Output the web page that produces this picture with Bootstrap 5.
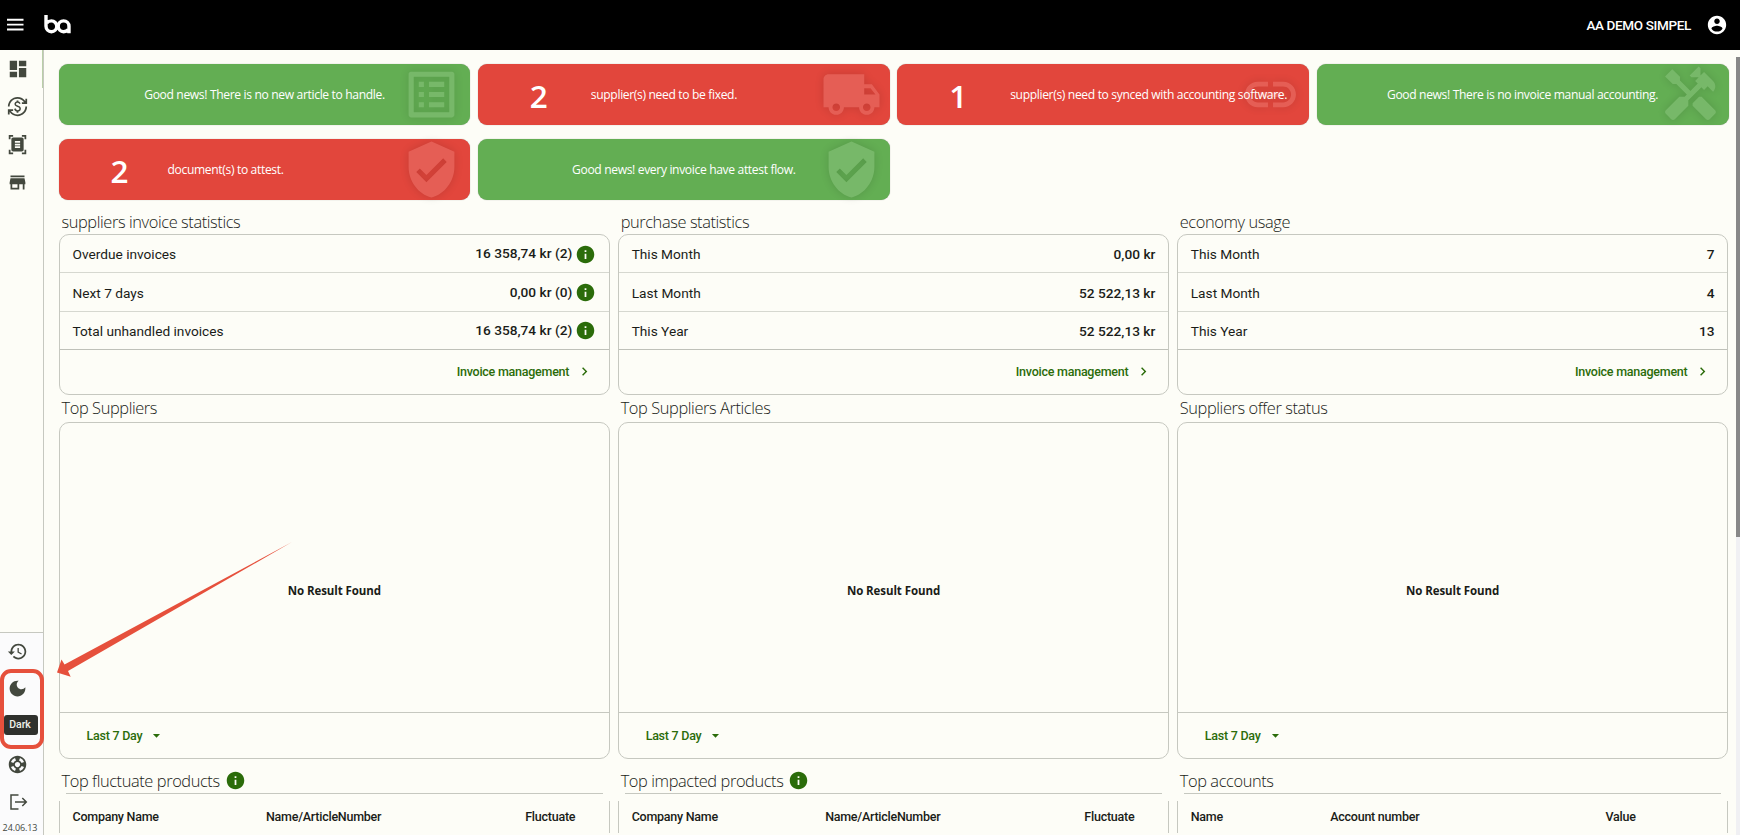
<!DOCTYPE html>
<html lang="en">
<head>
<meta charset="utf-8">
<title>Dashboard</title>
<link href="https://cdn.jsdelivr.net/npm/bootstrap@5.3.0/dist/css/bootstrap.min.css" rel="stylesheet">
<style>
:root{--ln:#c6c8c0;--bg:#fdfdf7;--gr:#2b6c0a}
html,body{height:100%;overflow:hidden}
body{background:var(--bg);font-family:Roboto,"Liberation Sans",sans-serif;font-size:13.7px;line-height:20px;color:#1a1c18}
svg{fill:currentColor;display:block;flex:none}
.topbar{height:50px;background:#000;color:#fff;padding:0 12px 0 5px}
.company{font-size:13.5px;font-weight:500;margin-right:15px;line-height:20px;letter-spacing:-.35px}
.shell{height:785px}
.side{width:44px;border-right:1px solid var(--ln);color:#43483e;padding-top:.5px;position:relative}
.side .ico{height:37.6px;width:35px;display:flex;align-items:center;justify-content:center}
.side .active-mark{position:absolute;right:0;top:0;width:1px;height:38px;background:#b9cfa8}
.side-low{background:#fbfbfc;border-top:1px solid var(--ln);height:203px}
.side-low .ico:first-child{margin-top:-.5px}
.ver{font:9px/12px "Open Sans",sans-serif;width:40px;text-align:center;letter-spacing:-.1px;margin-top:2px}
.seg{font-family:"Open Sans","Noto Sans",sans-serif}
.content-area{padding:13.5px 7.5px 0 14.5px;min-width:0}
.tiles{display:grid;grid-template-columns:repeat(4,1fr);gap:14px 7.4px}
.tile{height:61px;border-radius:9px;color:#fff;position:relative;font-size:12.1px;box-shadow:0 0 1px #0006;display:flex;align-items:center;letter-spacing:-.35px}
.tile.ok{background:#63ae53;justify-content:center}
.tile.bad{background:#e2463c}
.tile svg{position:absolute;right:8px;top:0;opacity:.13;filter:drop-shadow(0 0 5px #000)}
.tile .num{width:57px;margin-left:52px;font-size:31.5px;font-weight:600;padding-top:3px}
.tile .msg{position:relative;white-space:nowrap;padding-top:2.5px}
.cols{display:grid;grid-template-columns:repeat(3,1fr);gap:0 7.4px}
.ttl{font-family:"Open Sans",sans-serif;font-weight:300;font-size:16.4px;letter-spacing:-.4px;padding-left:3px;white-space:nowrap;display:flex;align-items:center}
.pane{border:1px solid var(--ln);border-radius:10px}
.line{height:38.4px;border-bottom:1px solid #d6d8d0;padding:1px 13px 0;display:flex;align-items:center;justify-content:space-between}
.line.last{border-color:#bfc1b9}
.line b{font-weight:500}
.line .v{display:flex;align-items:center;gap:3px}
.line .v b{margin-top:-2px}
.line svg,.ttl svg{color:var(--gr)}
.lnk{color:var(--gr);font-weight:500;font-size:12.5px;letter-spacing:-.25px}
.empty{height:290px;border-bottom:1px solid var(--ln);padding-top:158px;text-align:center;font:700 11.5px/20px "Open Sans",sans-serif;letter-spacing:-.08px}
.rule{height:1px;background:var(--ln);margin:0 7px}
.thead-row{margin-top:7px;height:32px;border:solid var(--ln);border-width:0 1px;display:grid;grid-template-columns:193.5px 1fr 84px;padding-left:13px;align-items:center;font-weight:500;font-size:12.5px;letter-spacing:-.25px}
.thead-row.acc{grid-template-columns:139.5px 1fr 122px}
.tip{position:absolute;left:4px;top:715px;width:34px;height:20px;border-radius:3px;background:#2f312d;color:#f0f1eb;font-size:10.5px;line-height:20px;text-align:center;font-weight:500;letter-spacing:-.1px;padding-right:2px}
.overlay{position:absolute;left:0;top:0;pointer-events:none}
.sb{width:4px;height:778px;margin-top:7px;background:#f0f0f3}
.sb div{height:480px;background:#888}
</style>
</head>
<body>
<svg width="0" height="0" class="position-absolute"><defs>
<symbol id="info" viewBox="0 0 24 24"><path d="M12 2C6.48 2 2 6.48 2 12s4.48 10 10 10 10-4.48 10-10S17.520 2 12 2zm1 15h-2v-6h2v6zm0-8h-2V7h2v2z"/></symbol>
<symbol id="shield" viewBox="0 0 24 24"><path d="M12 1L3 5v6c0 5.550 3.840 10.740 9 12 5.160-1.260 9-6.450 9-12V5l-9-4zm-2 16l-4-4 1.410-1.410L10 14.170l6.590-6.590L18 9l-8 8z"/></symbol>
<symbol id="chev" viewBox="0 0 24 24"><path d="M10 6L8.590 7.410 13.170 12l-4.580 4.590L10 18l6-6z"/></symbol>
<symbol id="caret" viewBox="0 0 24 24"><path d="M7 10l5 5 5-5z"/></symbol>
</defs></svg>
<header class="topbar d-flex align-items-center">
 <svg width="20" height="20" viewBox="0 0 20 20"><path d="M2 3.800h16.500v1.900H2zM2 8.700h16.500v1.900H2zM2 13.600h16.500v1.900H2z"/></svg>
 <svg class="ms-3" width="34" height="24" viewBox="41 13 34 24" style="fill:none" stroke="#fff" stroke-width="3.400"><path d="M46 15v11.300a5.400 5.400 0 1 0 5.400-5.400c-2 0-3.600.8-4.600 2M69 33.300v-7a5.400 5.400 0 1 0-5.400 5.400c2 0 3.600-.8 4.600-2"/></svg>
 <span class="company ms-auto">AA DEMO SIMPEL</span>
 <svg width="22" height="22" viewBox="0 0 24 24"><path d="M12 2C6.480 2 2 6.480 2 12s4.480 10 10 10 10-4.480 10-10S17.520 2 12 2zm0 3c1.660 0 3 1.340 3 3s-1.340 3-3 3-3-1.340-3-3 1.340-3 3-3zm0 14.200c-2.500 0-4.710-1.280-6-3.220.03-1.990 4-3.080 6-3.080 1.990 0 5.970 1.090 6 3.080-1.290 1.940-3.500 3.220-6 3.220z"/></svg>
</header>
<div class="shell d-flex">
 <nav class="side d-flex flex-column justify-content-between flex-shrink-0">
  <span class="active-mark"></span>
  <div>
   <div class="ico"><svg width="22" height="22" viewBox="0 0 24 24"><path d="M3 13h8V3H3v10zm0 8h8v-6H3v6zm10 0h8V11h-8v10zm0-18v6h8V3h-8z"/></svg></div>
   <div class="ico"><svg width="21" height="21" viewBox="0 0 24 24"><path d="M12.890 11.100c-1.780-.59-2.640-.96-2.640-1.900 0-1.020 1.110-1.390 1.810-1.390 1.310 0 1.790.99 1.900 1.340l1.580-.67C15.390 8.030 14.720 6.560 13 6.240V5h-2v1.260C8.520 6.820 8.510 9.120 8.510 9.220c0 2.270 2.250 2.910 3.350 3.310 1.580.56 2.280 1.070 2.280 2.030 0 1.130-1.050 1.610-1.980 1.610-1.820 0-2.340-1.870-2.400-2.090L8.100 14.750c.63 2.190 2.280 2.780 2.900 2.960V19h2v-1.240c.4-.09 2.900-.59 2.900-3.220 0-1.390-.61-2.610-3.010-3.440zM3 21H1v-6h6v2H4.520c1.610 2.410 4.360 4 7.480 4 4.970 0 9-4.030 9-9h2c0 6.080-4.920 11-11 11-3.720 0-7.010-1.850-9-4.670V21zM1 12C1 5.920 5.920 1 12 1c3.720 0 7.010 1.850 9 4.670V3h2v6h-6V7h2.480C17.870 4.590 15.120 3 12 3c-4.970 0-9 4.030-9 9H1z"/></svg></div>
   <div class="ico"><svg width="21" height="21" viewBox="0 0 24 24"><path d="M7 3H4v3H2V1h5v2zm15 3V1h-5v2h3v3h2zM7 21H4v-3H2v5h5v-2zm13-3v3h-3v2h5v-5h-2zM19 18c0 1.100-.9 2-2 2H7c-1.100 0-2-.9-2-2V6c0-1.100.9-2 2-2h10c1.100 0 2 .9 2 2v12zM15 8H9v2h6V8zm0 3H9v2h6v-2zm0 3H9v2h6v-2z"/></svg></div>
   <div class="ico"><svg width="21" height="21" viewBox="0 0 24 24"><path d="M20 4H4v2h16V4zm1 10v-2l-1-5H4l-1 5v2h1v6h10v-6h4v6h2v-6h1zm-9 4H6v-4h6v4z"/></svg></div>
  </div>
  <div class="side-low">
   <div class="ico"><svg width="21" height="21" viewBox="0 0 24 24"><path d="M13 3c-4.970 0-9 4.030-9 9H1l3.890 3.890.07.14L9 12H6c0-3.870 3.130-7 7-7s7 3.130 7 7-3.130 7-7 7c-1.930 0-3.680-.79-4.940-2.060l-1.420 1.420C8.270 19.990 10.510 21 13 21c4.970 0 9-4.030 9-9s-4.030-9-9-9zm-1 5v5l4.280 2.540.72-1.210-3.500-2.080V8H12z"/></svg></div>
   <div class="ico"><svg width="21" height="21" viewBox="0 0 24 24"><path d="M12 3c-4.970 0-9 4.030-9 9s4.030 9 9 9 9-4.030 9-9c0-.46-.04-.92-.1-1.360-.98 1.370-2.580 2.260-4.400 2.260-2.980 0-5.400-2.420-5.400-5.400 0-1.810.89-3.420 2.260-4.400C12.920 3.040 12.460 3 12 3z"/></svg></div>
   <div class="ico"></div>
   <div class="ico"><svg width="21" height="21" viewBox="0 0 24 24"><path d="M12 2C6.480 2 2 6.480 2 12s4.480 10 10 10 10-4.480 10-10S17.520 2 12 2zm7.460 7.120-2.780 1.150c-.51-1.360-1.580-2.440-2.950-2.940l1.150-2.780c2.100.8 3.770 2.470 4.580 4.570zM12 15c-1.660 0-3-1.340-3-3s1.340-3 3-3 3 1.340 3 3-1.340 3-3 3zM9.130 4.540l1.170 2.780c-1.380.5-2.470 1.590-2.980 2.970L4.540 9.130c.81-2.110 2.480-3.780 4.590-4.590zM4.540 14.870l2.780-1.150c.51 1.380 1.590 2.460 2.970 2.960l-1.170 2.780c-2.100-.81-3.770-2.480-4.580-4.590zm10.340 4.590-1.150-2.780c1.370-.51 2.450-1.590 2.950-2.970l2.780 1.170c-.81 2.100-2.480 3.770-4.580 4.580z"/></svg></div>
   <div class="ico"><svg width="20" height="20" viewBox="0 0 20 20" style="fill:none" stroke="currentColor" stroke-width="1.500"><path d="M10.500 3H3v14h7.500M7 10h11M14.300 6l4 4-4 4"/></svg></div>
   <div class="ver">24.06.13</div>
  </div>
 </nav>
 <main class="content-area flex-grow-1">
  <div class="tiles seg">
   <div class="tile ok"><svg width="61" height="61" viewBox="0 0 24 24"><path d="M19 5v14H5V5h14m1.100-2H3.900c-.5 0-.9.4-.9.9v16.200c0 .4.4.9.9.9h16.200c.4 0 .9-.5.9-.9V3.900c0-.5-.5-.9-.9-.9zM11 7h6v2h-6V7zm0 4h6v2h-6v-2zm0 4h6v2h-6zM7 7h2v2H7zm0 4h2v2H7zm0 4h2v2H7z"/></svg><span class="msg">Good news! There is no new article to handle.</span></div>
   <div class="tile bad"><svg width="61" height="61" viewBox="0 0 24 24"><path d="M20 8h-3V4H3c-1.100 0-2 .9-2 2v11h2c0 1.660 1.340 3 3 3s3-1.340 3-3h6c0 1.660 1.340 3 3 3s3-1.340 3-3h2v-5l-3-4zM6 18.500c-.83 0-1.500-.67-1.500-1.500s.67-1.500 1.500-1.500 1.500.67 1.500 1.500-.67 1.500-1.500 1.500zm13.500-9l1.960 2.500H17V9.500h2.500zm-1.500 9c-.83 0-1.500-.67-1.500-1.500s.67-1.500 1.500-1.500 1.500.67 1.500 1.500-.67 1.500-1.500 1.500z"/></svg><span class="num">2</span><span class="msg ms-1">supplier(s) need to be fixed.</span></div>
   <div class="tile bad"><svg width="61" height="61" viewBox="0 0 24 24"><path d="M3.900 12c0-1.710 1.390-3.100 3.100-3.100h4V7H7c-2.760 0-5 2.240-5 5s2.240 5 5 5h4v-1.900H7c-1.710 0-3.100-1.390-3.100-3.100zM8 13h8v-2H8v2zm9-6h-4v1.900h4c1.710 0 3.100 1.390 3.100 3.100s-1.390 3.100-3.100 3.100h-4V17h4c2.760 0 5-2.240 5-5s-2.240-5-5-5z"/></svg><span class="num">1</span><span class="msg ms-1">supplier(s) need to synced with accounting software.</span></div>
   <div class="tile ok"><svg width="61" height="61" viewBox="0 0 24 24"><path d="M21.670 18.170l-5.300-5.300h-.99l-2.540 2.540v.99l5.300 5.300c.39.39 1.020.39 1.410 0l2.120-2.120c.39-.38.39-1.020 0-1.410zM17.340 10.190l1.410-1.410 2.120 2.120c1.170-1.170 1.170-3.070 0-4.240l-3.540-3.540-1.410 1.410V1.710L15.220 1l-3.540 3.540.71.71h2.830l-1.410 1.410 1.060 1.060-2.890 2.890-4.130-4.130V5.060L4.830 2.040 2 4.870 5.030 7.900h1.410l4.130 4.130-.85.85H7.600l-5.300 5.300c-.39.39-.39 1.020 0 1.410l2.120 2.120c.39.39 1.020.39 1.410 0l5.300-5.300v-2.120l5.150-5.150 1.060 1.050z"/></svg><span class="msg">Good news! There is no invoice manual accounting.</span></div>
   <div class="tile bad"><svg width="61" height="61"><use href="#shield"/></svg><span class="num">2</span><span class="msg">document(s) to attest.</span></div>
   <div class="tile ok"><svg width="61" height="61"><use href="#shield"/></svg><span class="msg">Good news! every invoice have attest flow.</span></div>
  </div>
  <div class="cols">
   <section>
    <div class="ttl" style="height:34.500px;padding-top:10px">suppliers invoice statistics</div>
    <div class="pane" style="height:160.500px">
     <div class="line"><span>Overdue invoices</span><span class="v"><b>16 358,74 kr (2)</b><svg width="21" height="21"><use href="#info"/></svg></span></div>
     <div class="line"><span>Next 7 days</span><span class="v"><b>0,00 kr (0)</b><svg width="21" height="21"><use href="#info"/></svg></span></div>
     <div class="line last"><span>Total unhandled invoices</span><span class="v"><b>16 358,74 kr (2)</b><svg width="21" height="21"><use href="#info"/></svg></span></div>
     <div class="lnk d-flex align-items-center justify-content-end" style="height:43px;padding-right:16px;gap:7px">Invoice management<svg width="17" height="17"><use href="#chev"/></svg></div>
    </div>
    <div class="ttl" style="height:27.500px">Top Suppliers</div>
    <div class="pane" style="height:336.500px"><div class="empty">No Result Found</div>
     <div class="lnk d-flex align-items-center" style="height:45px;padding-left:27px;gap:6px">Last 7 Day<svg width="17" height="17"><use href="#caret"/></svg></div></div>
    <div class="ttl" style="height:34.500px;padding-top:10px;gap:5px">Top fluctuate products<svg width="21" height="21"><use href="#info"/></svg></div>
    <div class="rule"></div>
    <div class="thead-row"><span>Company Name</span><span>Name/ArticleNumber</span><span>Fluctuate</span></div>
   </section>
   <section>
    <div class="ttl" style="height:34.500px;padding-top:10px">purchase statistics</div>
    <div class="pane" style="height:160.500px">
     <div class="line"><span>This Month</span><b>0,00 kr</b></div>
     <div class="line"><span>Last Month</span><b>52 522,13 kr</b></div>
     <div class="line last"><span>This Year</span><b>52 522,13 kr</b></div>
     <div class="lnk d-flex align-items-center justify-content-end" style="height:43px;padding-right:16px;gap:7px">Invoice management<svg width="17" height="17"><use href="#chev"/></svg></div>
    </div>
    <div class="ttl" style="height:27.500px">Top Suppliers Articles</div>
    <div class="pane" style="height:336.500px"><div class="empty">No Result Found</div>
     <div class="lnk d-flex align-items-center" style="height:45px;padding-left:27px;gap:6px">Last 7 Day<svg width="17" height="17"><use href="#caret"/></svg></div></div>
    <div class="ttl" style="height:34.500px;padding-top:10px;gap:5px">Top impacted products<svg width="21" height="21"><use href="#info"/></svg></div>
    <div class="rule"></div>
    <div class="thead-row"><span>Company Name</span><span>Name/ArticleNumber</span><span>Fluctuate</span></div>
   </section>
   <section>
    <div class="ttl" style="height:34.500px;padding-top:10px">economy usage</div>
    <div class="pane" style="height:160.500px">
     <div class="line"><span>This Month</span><b>7</b></div>
     <div class="line"><span>Last Month</span><b>4</b></div>
     <div class="line last"><span>This Year</span><b>13</b></div>
     <div class="lnk d-flex align-items-center justify-content-end" style="height:43px;padding-right:16px;gap:7px">Invoice management<svg width="17" height="17"><use href="#chev"/></svg></div>
    </div>
    <div class="ttl" style="height:27.500px">Suppliers offer status</div>
    <div class="pane" style="height:336.500px"><div class="empty">No Result Found</div>
     <div class="lnk d-flex align-items-center" style="height:45px;padding-left:27px;gap:6px">Last 7 Day<svg width="17" height="17"><use href="#caret"/></svg></div></div>
    <div class="ttl" style="height:34.500px;padding-top:10px">Top accounts</div>
    <div class="rule"></div>
    <div class="thead-row acc"><span>Name</span><span>Account number</span><span>Value</span></div>
   </section>
  </div>
 </main>
 <div class="sb flex-shrink-0"><div></div></div>
</div>
<svg class="overlay" width="300" height="835"><rect x="2" y="671" width="40" height="76" rx="9" fill="none" stroke="#e6503c" stroke-width="4"/><path fill="#e6503c" d="M57 672.500L61.500 659.500l3 5L292 542 68 671l2.700 5.700z"/></svg>
<div class="tip">Dark</div>
<script src="https://cdn.jsdelivr.net/npm/bootstrap@5.3.0/dist/js/bootstrap.bundle.min.js"></script>
</body>
</html>
